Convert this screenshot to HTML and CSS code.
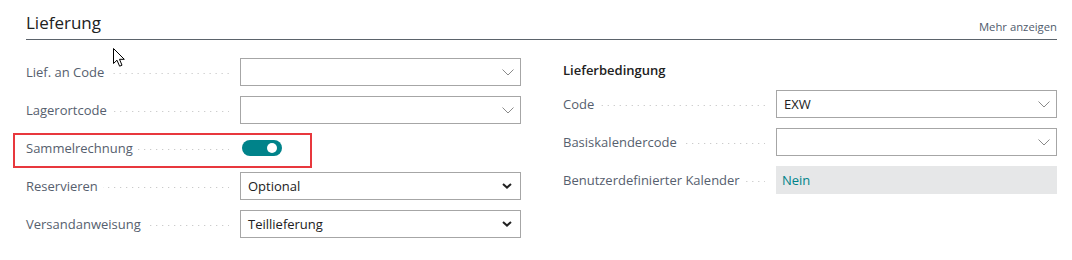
FILE: index.html
```html
<!DOCTYPE html>
<html lang="de">
<head>
<meta charset="utf-8">
<title>Lieferung</title>
<link rel="stylesheet" href="styles.css">
</head>
<body>
<div class="page">
  <div class="header">
    <h2 class="title">Lieferung</h2>
    <span class="more">Mehr anzeigen</span>
  </div>
  <div class="form">
    <div class="col">
      <div class="row">
        <div class="label"><span>Lief. an Code</span><i class="dots"></i></div>
        <div class="field lookup"><span class="val"></span>
          <svg class="chev" width="12" height="7" viewBox="0 0 12 7"><path d="M0.5 0.5 L6 6 L11.5 0.5" fill="none" stroke="#8a8a8a" stroke-width="1"/></svg>
        </div>
      </div>
      <div class="row">
        <div class="label"><span>Lagerortcode</span><i class="dots"></i></div>
        <div class="field lookup"><span class="val"></span>
          <svg class="chev" width="12" height="7" viewBox="0 0 12 7"><path d="M0.5 0.5 L6 6 L11.5 0.5" fill="none" stroke="#8a8a8a" stroke-width="1"/></svg>
        </div>
      </div>
      <div class="row highlighted">
        <div class="label"><span>Sammelrechnung</span><i class="dots"></i></div>
        <div class="switch-cell"><span class="switch"><span class="knob"></span></span></div>
      </div>
      <div class="row">
        <div class="label"><span>Reservieren</span><i class="dots"></i></div>
        <div class="field select"><span class="val">Optional</span>
          <svg class="chev-bold" width="10" height="6" viewBox="0 0 10 6"><path d="M1 1 L5 4.6 L9 1" fill="none" stroke="#222" stroke-width="2"/></svg>
        </div>
      </div>
      <div class="row">
        <div class="label"><span>Versandanweisung</span><i class="dots"></i></div>
        <div class="field select"><span class="val">Teillieferung</span>
          <svg class="chev-bold" width="10" height="6" viewBox="0 0 10 6"><path d="M1 1 L5 4.6 L9 1" fill="none" stroke="#222" stroke-width="2"/></svg>
        </div>
      </div>
    </div>
    <div class="col">
      <div class="group-title">Lieferbedingung</div>
      <div class="row">
        <div class="label"><span>Code</span><i class="dots"></i></div>
        <div class="field lookup"><span class="val">EXW</span>
          <svg class="chev" width="12" height="7" viewBox="0 0 12 7"><path d="M0.5 0.5 L6 6 L11.5 0.5" fill="none" stroke="#8a8a8a" stroke-width="1"/></svg>
        </div>
      </div>
      <div class="row">
        <div class="label"><span>Basiskalendercode</span><i class="dots"></i></div>
        <div class="field lookup"><span class="val"></span>
          <svg class="chev" width="12" height="7" viewBox="0 0 12 7"><path d="M0.5 0.5 L6 6 L11.5 0.5" fill="none" stroke="#8a8a8a" stroke-width="1"/></svg>
        </div>
      </div>
      <div class="row">
        <div class="label"><span>Benutzerdefinierter Kalender</span><i class="dots"></i></div>
        <div class="field readonly"><span class="val link">Nein</span></div>
      </div>
    </div>
  </div>
  <svg class="cursor" width="14" height="20" viewBox="0 0 14 20"><path d="M0.5 0.5 L0.5 15.5 L4 12.2 L6.6 18.2 L9 17.2 L6.5 11.3 L11.3 11.3 Z" fill="#fff" stroke="#000" stroke-width="1" stroke-linejoin="miter"/></svg>
</div>
</body>
</html>
```
FILE: styles.css
```css
* { box-sizing: border-box; }
html, body { margin: 0; padding: 0; background: #fff; }
body {
  font-family: "Open Sans", "Liberation Sans", sans-serif;
  font-size: 13px;
  color: #212121;
}
.page {
  position: relative;
  width: 1072px;
  height: 260px;
  padding: 0 15px 0 26px;
}
.header {
  display: flex;
  justify-content: space-between;
  align-items: flex-end;
  padding-top: 11px;
  padding-bottom: 4px;
  border-bottom: 1px solid #5b636b;
}
.title {
  margin: 0;
  font-size: 17px;
  font-weight: 400;
  line-height: 24px;
  color: #212121;
}
.more {
  font-size: 11.3px;
  line-height: 17px;
  color: #505c6d;
}
.form {
  display: grid;
  grid-template-columns: 495px 1fr;
  column-gap: 42px;
  padding-top: 18px;
}
.col {
  display: flex;
  flex-direction: column;
  gap: 10px;
}
.group-title {
  height: 22px;
  padding-top: 3px;
  line-height: 19px;
  font-weight: 600;
  font-size: 13px;
  color: #212121;
}
.row {
  position: relative;
  display: grid;
  grid-template-columns: 1fr 281px;
  height: 28px;
}
.label {
  display: flex;
  align-items: center;
  color: #56606e;
  white-space: nowrap;
  min-width: 0;
}
.dots {
  flex: 1;
  height: 1px;
  margin: 2px 11px 0 5px;
  background-image: linear-gradient(to right, transparent 5px, #bdbdbd 5px);
  background-size: 6px 1px;
  background-repeat: repeat-x;
  background-position: right top;
}
.field {
  display: flex;
  align-items: center;
  justify-content: space-between;
  height: 28px;
  border: 1px solid #a6a6a6;
  background: #fff;
  padding: 0 6px 0 7px;
}
.field.select { padding-right: 8px; }
.field.readonly {
  border: none;
  background: #e6e7e8;
  padding-left: 6px;
}
.val { color: #212121; }
.link { color: #00838a; }
.switch-cell {
  display: flex;
  align-items: center;
  padding-left: 2px;
}
.switch {
  position: relative;
  display: block;
  width: 40px;
  height: 16px;
  border-radius: 8px;
  background: #00838a;
}
.knob {
  position: absolute;
  top: 3px;
  right: 5px;
  width: 10px;
  height: 10px;
  border-radius: 50%;
  background: #fff;
}
.highlighted::after {
  content: "";
  position: absolute;
  left: -13px;
  top: -1px;
  width: 295px;
  height: 31px;
  border: 2px solid #e8383d;
  pointer-events: none;
}
.cursor {
  position: absolute;
  left: 113px;
  top: 48px;
}
```
